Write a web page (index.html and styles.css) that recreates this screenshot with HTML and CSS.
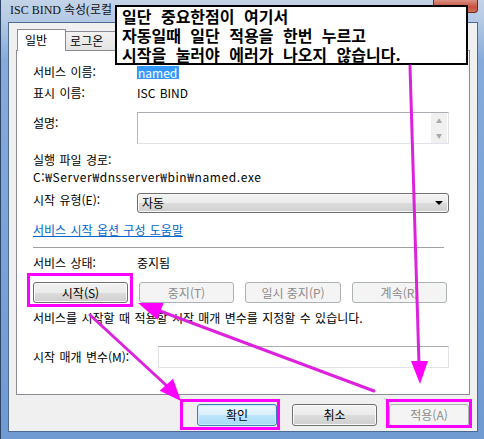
FILE: index.html
```html
<!DOCTYPE html>
<html lang="ko">
<head>
    <meta charset="UTF-8">
    <title>ISC BIND 속성</title>
    <link rel="stylesheet" href="styles.css">
</head>
<body>
    <div class="window">
        <div class="titlebar">
            <span class="title">ISC BIND 속성(로컬 컴퓨터)</span>
            <div class="close"></div>
        </div>
        <div class="client">
            <div class="tabs">
                <div class="tab active">일반</div>
                <div class="tab">로그온</div>
            </div>
            <div class="panel">
                <div class="row first">
                    <span class="label">서비스 이름:</span>
                    <span class="selected">named</span>
                </div>
                <div class="row gap5">
                    <span class="label">표시 이름:</span>
                    <span>ISC BIND</span>
                </div>
                <div class="row desc">
                    <span class="label">설명:</span>
                    <div class="textarea">
                        <div class="scroll"><span>▲</span><span>▼</span></div>
                    </div>
                </div>
                <div class="row path-label">실행 파일 경로:</div>
                <div class="path">C:₩Server₩dnsserver₩bin₩named.exe</div>
                <div class="row start-type">
                    <span class="label">시작 유형(E):</span>
                    <div class="select">자동<span class="arrow"></span></div>
                </div>
                <div class="row link-row"><a class="link">서비스 시작 옵션 구성 도움말</a></div>
                <div class="sep"></div>
                <div class="row status">
                    <span class="label">서비스 상태:</span>
                    <span>중지됨</span>
                </div>
                <div class="svc-buttons">
                    <button class="btn">시작(S)</button>
                    <button class="btn" disabled>중지(T)</button>
                    <button class="btn wide" disabled>일시 중지(P)</button>
                    <button class="btn" disabled>계속(R)</button>
                </div>
                <div class="row hint">서비스를 시작할 때 적용할 시작 매개 변수를 지정할 수 있습니다.</div>
                <div class="row params">
                    <span class="label long">시작 매개 변수(M):</span>
                    <div class="input"></div>
                </div>
            </div>
            <div class="footer">
                <button class="btn default ok">확인</button>
                <button class="btn cancel">취소</button>
                <button class="btn apply" disabled>적용(A)</button>
            </div>
        </div>
    </div>

    <div class="note">일단 중요한점이 여기서<br>자동일때 일단 적용을 한번 누르고<br>시작을 눌러야 에러가 나오지 않습니다.</div>

    <svg class="marks" width="484" height="439" viewBox="0 0 484 439">
        <g fill="none" stroke="#ff00ff" stroke-width="3">
            <rect x="28.5" y="274.5" width="103" height="31"/>
            <rect x="181.5" y="400.5" width="97" height="28"/>
            <rect x="387.5" y="400.5" width="83" height="26"/>
        </g>
        <g stroke="#dd22dd" stroke-width="3" stroke-linecap="round">
            <line x1="410" y1="66" x2="419" y2="364"/>
            <line x1="374" y1="391" x2="160" y2="311"/>
            <line x1="90" y1="315" x2="167" y2="386"/>
        </g>
        <g fill="#ff00ff">
            <polygon points="411,361 428,361 420,384"/>
            <polygon points="138,303 163.6,303 157.4,319.8"/>
            <polygon points="181,401 159.6,390.7 173,378.7"/>
        </g>
    </svg>
</body>
</html>
```

FILE: styles.css
```css
* {
    box-sizing: border-box;
}
body {
    margin: 0;
    width: 484px;
    height: 439px;
    overflow: hidden;
    position: relative;
    font-family: "Noto Sans CJK KR", sans-serif;
    font-size: 12px;
    color: #000;
}
.window {
    width: 484px;
    height: 439px;
    display: flex;
    flex-direction: column;
    padding: 0 6px 7px 7px;
    border-left: 1px solid #2d4466;
    background: linear-gradient(to bottom, #c3d4e8 0, #b3c9e4 22px, #86abdb 60px, #6f9ad2 100%);
}
.titlebar {
    height: 22px;
    flex: none;
    display: flex;
    align-items: flex-start;
}
.title {
    width: 107px;
    overflow: hidden;
    white-space: nowrap;
    padding: 3px 0 0 2px;
    line-height: 14px;
    font-family: "Liberation Serif", "Noto Sans CJK KR", serif;
    font-size: 12px;
    color: #111;
}
.close {
    margin-left: auto;
    width: 45px;
    height: 13px;
    border: 1px solid #6b2a22;
    border-top: none;
    border-radius: 0 0 4px 4px;
    background: linear-gradient(to bottom, #d98f82, #c5503e 60%, #d3705f);
}
.client {
    flex: 1;
    display: flex;
    flex-direction: column;
    background: #f0f0f0;
    border: 1px solid #4d6a92;
    padding: 0 7px;
}
.tabs {
    height: 27px;
    flex: none;
    display: flex;
    align-items: flex-end;
    padding-left: 1px;
}
.tab {
    width: 56px;
    height: 19px;
    line-height: 18px;
    padding: 0 8px 0 4px;
    border: 1px solid #898c95;
    border-bottom: none;
    border-left: none;
    background: linear-gradient(to bottom, #f2f2f2, #e3e3e3);
}
.tab.active {
    width: auto;
    height: 22px;
    margin-bottom: -1px;
    padding: 0 18px 0 7px;
    line-height: 20px;
    border-left: 1px solid #898c95;
    background: #fff;
    position: relative;
    z-index: 1;
}
.panel {
    height: 345px;
    flex: none;
    background: #fff;
    border: 1px solid #898c95;
    padding: 0 16px;
}
.row {
    display: flex;
    align-items: center;
    height: 16px;
    line-height: 16px;
    word-spacing: 1px;
}
.label {
    width: 104px;
    flex: none;
}
.label.long {
    width: 125px;
}
.first {
    margin-top: 13px;
}
.gap5 {
    margin-top: 5px;
}
.selected {
    display: inline-block;
    height: 13px;
    line-height: 13px;
    padding: 0 2px 0 1px;
    background: #3399ff;
    color: #fff;
}
.desc {
    margin-top: 11px;
    height: 32px;
    align-items: flex-start;
}
.desc .label {
    padding-top: 3px;
}
.textarea {
    width: 312px;
    height: 32px;
    border: 1px solid #e2e3ea;
    border-top-color: #abadb3;
    border-left-color: #b5b7bd;
    display: flex;
    justify-content: flex-end;
}
.scroll {
    width: 16px;
    height: 30px;
    margin-right: 1px;
    background: #f0f0f0;
    display: flex;
    flex-direction: column;
    align-items: center;
    justify-content: space-around;
    font-size: 6px;
    line-height: 8px;
    color: #a8a8a8;
}
.path-label {
    margin-top: 8px;
}
.path {
    line-height: 17px;
    letter-spacing: 0.6px;
}
.start-type {
    margin-top: 8px;
    height: 20px;
    align-items: flex-start;
}
.start-type .label {
    line-height: 14px;
}
.select {
    width: 312px;
    height: 20px;
    line-height: 18px;
    padding-left: 4px;
    border: 1px solid #707070;
    border-radius: 3px;
    background: linear-gradient(to bottom, #f2f2f2, #ebebeb 50%, #dddddd 50%, #cfcfcf);
    box-shadow: inset 0 0 0 1px #f8f8f8;
    display: flex;
    align-items: center;
}
.arrow {
    margin-left: auto;
    margin-right: 5px;
    width: 0;
    height: 0;
    border-left: 4px solid transparent;
    border-right: 4px solid transparent;
    border-top: 4px solid #000;
}
.link-row {
    margin-top: 9px;
}
.link {
    color: #0066cc;
    text-decoration: underline;
}
.sep {
    margin-top: 9px;
    width: 411px;
    height: 1px;
    background: #a0a0a0;
}
.status {
    margin-top: 7px;
}
.svc-buttons {
    margin-top: 11px;
    display: flex;
    gap: 11px;
}
.btn {
    width: 95px;
    height: 21px;
    padding: 0;
    font-family: "Noto Sans CJK KR", sans-serif;
    font-size: 12px;
    line-height: 18px;
    color: #000;
    border: 1px solid #707070;
    border-radius: 3px;
    background: linear-gradient(to bottom, #f2f2f2, #ebebeb 50%, #dddddd 50%, #cfcfcf);
    box-shadow: inset 0 0 0 1px #fbfbfb;
}
.btn:disabled {
    color: #8b8b8b;
    border-color: #adb2b5;
    background: #f4f4f4;
    box-shadow: none;
}
.btn.wide {
    width: 96px;
}
.hint {
    margin-top: 7px;
}
.params {
    margin-top: 20px;
    height: 22px;
}
.input {
    width: 291px;
    height: 22px;
    border: 1px solid #e2e3ea;
    border-top-color: #abadb3;
}
.footer {
    flex: 1;
    display: flex;
    justify-content: flex-end;
    align-items: flex-start;
    padding: 9px 1px 0 0;
}
.footer .btn {
    height: 22px;
}
.ok {
    width: 80px;
}
.cancel {
    width: 85px;
    margin-left: 15px;
}
.apply {
    width: 80px;
    margin-left: 12px;
}
.btn.default {
    border-color: #3c7fb1;
    background: linear-gradient(to bottom, #eaf6fd, #d9f0fc 50%, #bee6fd 50%, #a7d9f5);
    box-shadow: inset 0 0 0 1px #c9ecfd;
}
.note {
    position: absolute;
    left: 115px;
    top: 5px;
    width: 353px;
    height: 60px;
    padding: 0 0 0 5px;
    background: #fff;
    border: 2px solid #000;
    font-size: 16px;
    line-height: 19px;
    font-weight: 700;
    word-spacing: 5px;
    z-index: 2;
}
.marks {
    position: absolute;
    left: 0;
    top: 0;
    z-index: 3;
    pointer-events: none;
}
```
